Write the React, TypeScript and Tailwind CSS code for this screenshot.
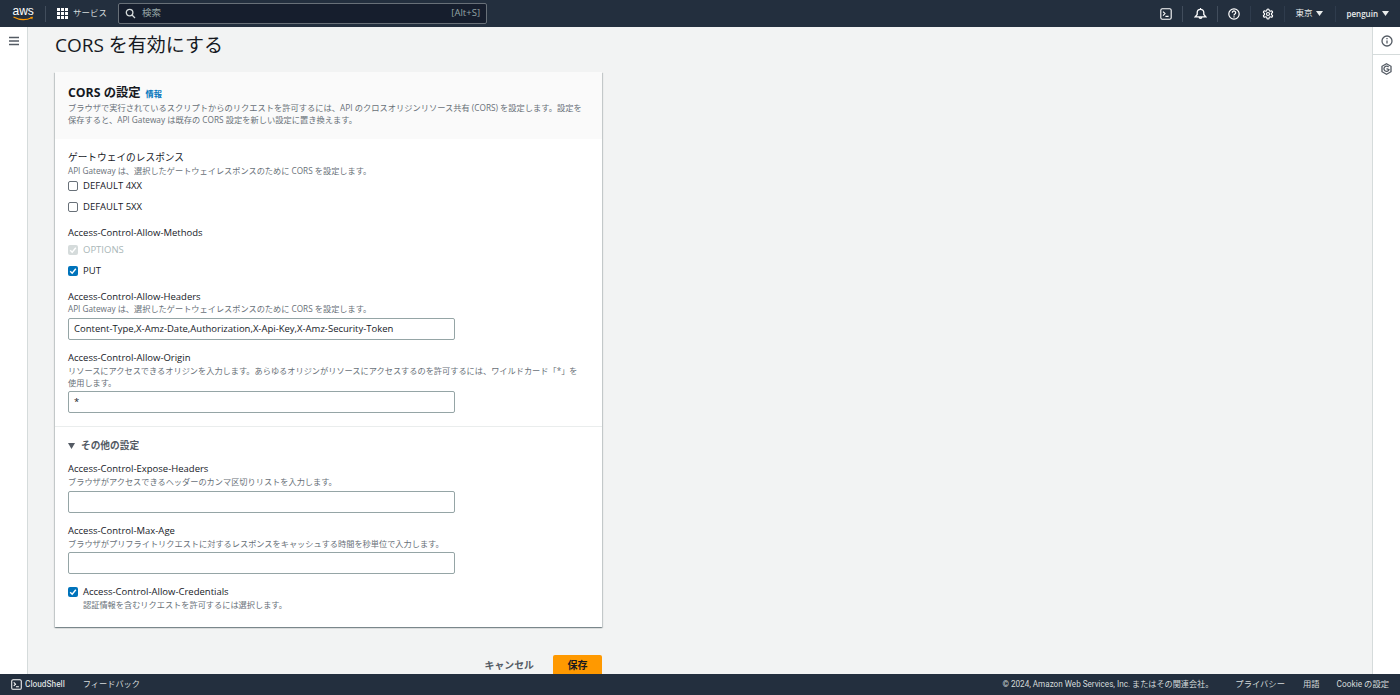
import React from "react";

const FONT = "font-['Open_Sans','Noto_Sans_CJK_JP',sans-serif]";

function Check({ state }: { state: "off" | "on" | "disabled" }) {
  if (state === "off") return <span className="block w-[10px] h-[10px] rounded-[2px] border border-[#687078] bg-white shrink-0" />;
  return (
    <span className={`flex items-center justify-center w-[10px] h-[10px] rounded-[2px] shrink-0 ${state === "on" ? "bg-[#0073bb]" : "bg-[#d5dbdb]"}`}>
      <svg width="8" height="8" viewBox="0 0 8 8" fill="none"><path d="M1.2 4.2 3.2 6.2 6.8 1.8" stroke="white" strokeWidth="1.4" /></svg>
    </span>
  );
}

function CheckRow({ state, label, className = "" }: { state: "off" | "on" | "disabled"; label: string; className?: string }) {
  return (
    <div className={`flex items-center gap-[5px] h-[12px] ${className}`}>
      <Check state={state} />
      <span className={`text-[9.5px] leading-[12px] ${state === "disabled" ? "text-[#aab7b8]" : "text-[#16191f]"}`}>{label}</span>
    </div>
  );
}

function Label({ children, className = "" }: { children: React.ReactNode; className?: string }) {
  return <div className={`text-[9.5px] leading-[12px] text-[#16191f] ${className}`}>{children}</div>;
}
function Hint({ children, className = "" }: { children: React.ReactNode; className?: string }) {
  return <div className={`text-[8.2px] text-[#687078] ${className}`}>{children}</div>;
}
function Field({ value = "", className = "" }: { value?: string; className?: string }) {
  return (
    <div className={`w-[387px] h-[22px] border border-[#95a5a6] rounded-[2px] bg-white px-[5px] flex items-center text-[9.5px] text-[#16191f] ${className}`}>{value}</div>
  );
}

function Sep() {
  return <span className="block w-px h-[16px] bg-[#414d5c]" />;
}

function Caret() {
  return <svg width="7" height="5" viewBox="0 0 7 5"><path d="M0 0h7L3.5 5z" fill="#eaeded" /></svg>;
}

function TerminalIcon({ size = 12 }: { size?: number }) {
  return (
    <svg width={size} height={size} viewBox="0 0 12 12" fill="none" stroke="#fff" strokeWidth="1.1">
      <rect x="0.8" y="0.8" width="10.4" height="10.4" rx="1.5" />
      <path d="M3 3.6 5 5.6 3 7.6M5.4 8.4H8.6" />
    </svg>
  );
}

export default function App() {
  return (
    <div className={`h-screen w-full flex flex-col overflow-hidden bg-[#f2f3f3] ${FONT}`}>
      <header className="h-[27px] shrink-0 bg-[#232f3e] flex items-center text-[#eaeded]">
        <div className="w-[45px] pl-[12px] shrink-0 flex">
          <svg width="24" height="17" viewBox="0 0 24 17">
            <text x="0.5" y="9.5" fontSize="12" fill="#fff" fontFamily="'Liberation Sans',sans-serif">aws</text>
            <path d="M1.5 12 Q11 17 19.500 12.800" stroke="#f90" strokeWidth="1.2" fill="none" />
            <path d="M18 12.100 21 11.800 20.200 14.600" fill="#f90" />
          </svg>
        </div>
        <Sep />
        <div className="flex items-center gap-[5px] ml-[11px] w-[61px] shrink-0">
          <span className="grid grid-cols-3 gap-[1.5px] w-[11px] h-[11px]">
            {Array.from({ length: 9 }).map((_, i) => <span key={i} className="bg-white w-[2.5px] h-[2.5px]" />)}
          </span>
          <span className="text-[8.5px] text-[#d5dbdb]">サービス</span>
        </div>
        <div className="w-[369px] h-[21px] bg-[#161e2d] border border-[#687078] rounded-[2px] flex items-center pl-[6px] pr-[6px]">
          <svg width="11" height="11" viewBox="0 0 11 11" fill="none" stroke="#d5dbdb" strokeWidth="1.3"><circle cx="4.6" cy="4.6" r="3.3" /><path d="M7 7 10 10" /></svg>
          <span className="ml-[6px] text-[9.500px] text-[#95a5a6]">検索</span>
          <span className="ml-auto text-[9.500px] text-[#95a5a6]">[Alt+S]</span>
        </div>
        <div className="ml-auto flex items-center h-full">
          <span className="flex w-[32px] justify-center"><TerminalIcon /></span>
          <Sep />
          <span className="flex w-[34px] justify-center">
            <svg width="13" height="13" viewBox="0 0 13 13" fill="none" stroke="#fff" strokeWidth="1.300"><path d="M6.500 1v1M1.200 9.800h10.600L9.800 7.500V5.600a3.300 3.300 0 0 0-6.600 0v1.900zM5.100 10a1.400 1.400 0 0 0 2.800 0" /></svg>
          </span>
          <Sep />
          <span className="flex w-[32px] justify-center">
            <svg width="12" height="12" viewBox="0 0 12 12" fill="none" stroke="#fff" strokeWidth="1.2"><circle cx="6" cy="6" r="5.200" /><path d="M4.300 4.700a1.700 1.700 0 1 1 2.600 1.400c-.6.400-.9.700-.9 1.400" /><path d="M6 8.300v1.200" /></svg>
          </span>
          <span className="block w-px h-[16px] bg-[#2f3c4d]" />
          <span className="flex w-[33px] justify-center">
            <svg width="12" height="12" viewBox="0 0 24 24" fill="none" stroke="#fff" strokeWidth="2.300"><path d="M12.220 2h-.44a2 2 0 0 0-2 2v.18a2 2 0 0 1-1 1.730l-.43.250a2 2 0 0 1-2 0l-.15-.080a2 2 0 0 0-2.730.730l-.22.380a2 2 0 0 0 .73 2.730l.15.100a2 2 0 0 1 1 1.720v.510a2 2 0 0 1-1 1.740l-.15.090a2 2 0 0 0-.73 2.730l.22.380a2 2 0 0 0 2.730.730l.15-.080a2 2 0 0 1 2 0l.43.250a2 2 0 0 1 1 1.730V20a2 2 0 0 0 2 2h.44a2 2 0 0 0 2-2v-.18a2 2 0 0 1 1-1.730l.43-.250a2 2 0 0 1 2 0l.15.080a2 2 0 0 0 2.730-.730l.22-.390a2 2 0 0 0-.73-2.730l-.15-.080a2 2 0 0 1-1-1.740v-.500a2 2 0 0 1 1-1.740l.15-.090a2 2 0 0 0 .73-2.730l-.22-.380a2 2 0 0 0-2.730-.730l-.15.080a2 2 0 0 1-2 0l-.43-.250a2 2 0 0 1-1-1.730V4a2 2 0 0 0-2-2z" /><circle cx="12" cy="12" r="3" /></svg>
          </span>
          <span className="block w-px h-[16px] bg-[#2f3c4d]" />
          <span className="ml-[10px] text-[8.500px]">東京</span>
          <span className="ml-[3px] flex"><Caret /></span>
          <span className="ml-[12px] block w-px h-[16px] bg-[#2f3c4d]" />
          <span className="ml-[11px] text-[8px] font-semibold">penguin</span>
          <span className="ml-[4px] mr-[11px] flex"><Caret /></span>
        </div>
      </header>

      <div className="flex-1 min-h-0 flex">
        <aside className="w-[28px] shrink-0 bg-white border-r border-[#d5dbdb] flex justify-center pt-[9px]">
          <svg width="10" height="10" viewBox="0 0 10 10" stroke="#545b64" strokeWidth="1.300"><path d="M0 1.500h10M0 5h10M0 8.500h10" /></svg>
        </aside>

        <main className="flex-1 min-w-0 overflow-hidden pl-[27px]">
          <h1 className="mt-[5px] h-[26px] text-[19px] leading-[26px] text-[#16191f]">CORS を有効にする</h1>
          <section className="mt-[14px] w-[547px] bg-white shadow-[0_1px_1px_0_rgba(0,28,36,0.3),1px_1px_1px_0_rgba(0,28,36,0.15),-1px_1px_1px_0_rgba(0,28,36,0.15)]">
            <div className="h-[67px] bg-[#fafafa] pl-[13px] pr-[14px] pt-[13px]">
              <div className="flex items-baseline gap-[5px]">
                <span className="text-[12.300px] leading-[16px] font-bold text-[#16191f]">CORS の設定</span>
                <span className="text-[8.200px] font-bold text-[#0073bb]">情報</span>
              </div>
              <p className="mt-[1px] text-[8.250px] leading-[11.500px] text-[#687078]">
                ブラウザで実行されているスクリプトからのリクエストを許可するには、API のクロスオリジンリソース共有 (CORS) を設定します。設定を<br />
                保存すると、API Gateway は既存の CORS 設定を新しい設定に置き換えます。
              </p>
            </div>

            <div className="pl-[13px] pr-[14px] pt-[13px] pb-[13px] border-b border-[#eaeded]">
              <Label className="text-[9.700px]">ゲートウェイのレスポンス</Label>
              <Hint className="mt-[1px] leading-[11px]">API Gateway は、選択したゲートウェイレスポンスのために CORS を設定します。</Hint>
              <CheckRow state="off" label="DEFAULT 4XX" className="mt-[4px]" />
              <CheckRow state="off" label="DEFAULT 5XX" className="mt-[9px]" />
              <Label className="mt-[14px]">Access-Control-Allow-Methods</Label>
              <CheckRow state="disabled" label="OPTIONS" className="mt-[5px]" />
              <CheckRow state="on" label="PUT" className="mt-[9px]" />
              <Label className="mt-[14px]">Access-Control-Allow-Headers</Label>
              <Hint className="leading-[11px]">API Gateway は、選択したゲートウェイレスポンスのために CORS を設定します。</Hint>
              <Field className="mt-[4px]" value="Content-Type,X-Amz-Date,Authorization,X-Api-Key,X-Amz-Security-Token" />
              <Label className="mt-[12px]">Access-Control-Allow-Origin</Label>
              <Hint className="mt-[1px] w-[514px] leading-[12px]">リソースにアクセスできるオリジンを入力します。あらゆるオリジンがリソースにアクセスするのを許可するには、ワイルドカード「*」を使用します。</Hint>
              <Field className="mt-[2px]" value="*" />
            </div>

            <div className="pl-[13px] pr-[14px] pt-[13px] pb-[17px]">
              <div className="flex items-center gap-[6px]">
                <svg width="7" height="6" viewBox="0 0 7 6"><path d="M0 0h7L3.500 6z" fill="#545b64" /></svg>
                <span className="text-[9.700px] leading-[11px] font-bold text-[#545b64]">その他の設定</span>
              </div>
              <Label className="mt-[12px]">Access-Control-Expose-Headers</Label>
              <Hint className="mt-[1px] leading-[11px]">ブラウザがアクセスできるヘッダーのカンマ区切りリストを入力します。</Hint>
              <Field className="mt-[4px]" />
              <Label className="mt-[12px]">Access-Control-Max-Age</Label>
              <Hint className="mt-[1px] leading-[11px]">ブラウザがプリフライトリクエストに対するレスポンスをキャッシュする時間を秒単位で入力します。</Hint>
              <Field className="mt-[3px]" />
              <div className="mt-[12px] flex items-start gap-[5px]">
                <span className="mt-[1px]"><Check state="on" /></span>
                <div>
                  <Label>Access-Control-Allow-Credentials</Label>
                  <Hint className="mt-[1px] leading-[11px]">認証情報を含むリクエストを許可するには選択します。</Hint>
                </div>
              </div>
            </div>
          </section>

          <div className="w-[547px] mt-[28px] flex justify-end items-center gap-[19px]">
            <span className="text-[9.900px] font-bold text-[#545b64]">キャンセル</span>
            <span className="w-[49px] h-[21px] bg-[#ff9900] rounded-[2px] flex items-center justify-center text-[10px] font-bold text-[#16191f]">保存</span>
          </div>
        </main>

        <aside className="w-[28px] shrink-0 bg-white border-l border-[#d5dbdb] flex flex-col">
          <div className="h-[28px] pt-[1px] flex items-center justify-center border-b border-[#d5dbdb]">
            <svg width="12" height="12" viewBox="0 0 12 12" fill="none" stroke="#545b64" strokeWidth="1.300"><circle cx="6" cy="6" r="5" /><path d="M6 5.400v3.200M6 3v1.300" /></svg>
          </div>
          <div className="h-[28px] flex items-center justify-center">
            <svg width="11" height="12" viewBox="0 0 11 12" fill="none" stroke="#545b64" strokeWidth="1.300"><path d="M5.500.8 10 3.300v5.400L5.500 11.200 1 8.700V3.300z" /><path d="M7.600 4.200A2.600 2.600 0 1 0 8 6.600L5.500 5.700" /></svg>
          </div>
        </aside>
      </div>

      <footer className="h-[21px] shrink-0 bg-[#232f3e] flex items-center text-[8.300px] text-[#d5dbdb] relative z-10">
        <span className="ml-[11px] flex"><TerminalIcon size={11} /></span>
        <span className="ml-[3px] font-medium font-['Roboto',sans-serif]">CloudShell</span>
        <span className="ml-[18px] text-[8.200px]">フィードバック</span>
        <span className="ml-auto text-[8.150px] font-['Roboto','Noto_Sans_CJK_JP',sans-serif]">© 2024, Amazon Web Services, Inc. またはその関連会社。</span>
        <span className="ml-[22px]">プライバシー</span>
        <span className="ml-[18px]">用語</span>
        <span className="ml-[17px] mr-[11px] font-['Roboto','Noto_Sans_CJK_JP',sans-serif]">Cookie の設定</span>
      </footer>
    </div>
  );
}
